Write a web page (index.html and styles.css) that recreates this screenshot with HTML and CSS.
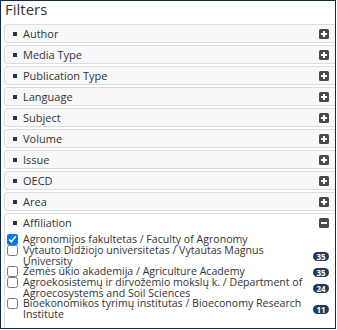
FILE: index.html
```html
<!DOCTYPE html>
<html lang="lt">
<head>
    <meta charset="UTF-8">
    <title>Filters</title>
    <link rel="stylesheet" href="styles.css">
</head>
<body>
    <div class="frame">
        <h2 class="title">Filters</h2>

        <div class="facets">
            <div class="facet"><div class="facet-head"><span class="facet-name">Author</span><span class="toggle plus"></span></div></div>
            <div class="facet"><div class="facet-head"><span class="facet-name">Media Type</span><span class="toggle plus"></span></div></div>
            <div class="facet"><div class="facet-head"><span class="facet-name">Publication Type</span><span class="toggle plus"></span></div></div>
            <div class="facet"><div class="facet-head"><span class="facet-name">Language</span><span class="toggle plus"></span></div></div>
            <div class="facet"><div class="facet-head"><span class="facet-name">Subject</span><span class="toggle plus"></span></div></div>
            <div class="facet"><div class="facet-head"><span class="facet-name">Volume</span><span class="toggle plus"></span></div></div>
            <div class="facet"><div class="facet-head"><span class="facet-name">Issue</span><span class="toggle plus"></span></div></div>
            <div class="facet"><div class="facet-head"><span class="facet-name">OECD</span><span class="toggle plus"></span></div></div>
            <div class="facet"><div class="facet-head"><span class="facet-name">Area</span><span class="toggle plus"></span></div></div>

            <div class="facet open">
                <div class="facet-head"><span class="facet-name">Affiliation</span><span class="toggle minus"></span></div>
                <ul class="facet-list">
                    <li class="opt">
                        <input type="checkbox" checked>
                        <span class="opt-text">Agronomijos fakultetas / Faculty of Agronomy</span>
                    </li>
                    <li class="opt">
                        <input type="checkbox">
                        <span class="opt-text">Vytauto Didžiojo universitetas / Vytautas Magnus University</span>
                        <span class="badge">35</span>
                    </li>
                    <li class="opt">
                        <input type="checkbox">
                        <span class="opt-text">Žemės ūkio akademija / Agriculture Academy</span>
                        <span class="badge">35</span>
                    </li>
                    <li class="opt">
                        <input type="checkbox">
                        <span class="opt-text">Agroekosistemų ir dirvožemio mokslų k. / Department of Agroecosystems and Soil Sciences</span>
                        <span class="badge">24</span>
                    </li>
                    <li class="opt">
                        <input type="checkbox">
                        <span class="opt-text">Bioekonomikos tyrimų institutas / Bioeconomy Research Institute</span>
                        <span class="badge">11</span>
                    </li>
                </ul>
                <a class="more" href="#">Show more</a>
            </div>
        </div>
    </div>
</body>
</html>
```

FILE: styles.css
```css
body {
    margin: 0;
    font-family: "Open Sans", "Noto Sans", sans-serif;
    color: #333;
    background: #fff;
}

.frame {
    box-sizing: border-box;
    width: 336px;
    height: 329px;
    border: 1px solid #102a48;
    overflow: hidden;
}

.title {
    margin: 0;
    padding-left: 4px;
    font-size: 15px;
    font-weight: 400;
    line-height: 17px;
    color: #333;
}

.facets {
    margin-top: 6px;
    padding-left: 3px;
}

.facet {
    width: calc(100% + 2px);
    box-sizing: border-box;
    margin-bottom: 2px;
    background: #f7f8fa;
    border: 1px solid #dcdcdc;
    border-radius: 3px;
}

.facet.open {
    background: #fff;
}

.facet-head {
    display: flex;
    align-items: center;
    height: 17px;
    padding: 0 7px 0 8px;
    font-size: 11px;
    line-height: 17px;
}

.facet-name {
    flex: 1;
    display: flex;
    align-items: center;
}

.facet-name::before {
    content: "";
    width: 4px;
    height: 4px;
    margin-right: 6px;
    background: #333;
}

.toggle {
    position: relative;
    width: 10px;
    height: 10px;
    border-radius: 1.5px;
    background: #4a4a4a;
}

.toggle::before,
.toggle::after {
    content: "";
    position: absolute;
    background: #fff;
}

.toggle::before {
    left: 2px;
    top: 4px;
    width: 6px;
    height: 2px;
}

.plus::after {
    left: 4px;
    top: 2px;
    width: 2px;
    height: 6px;
}

.facet-list {
    list-style: none;
    margin: 0;
    padding: 3px 7px 0 1px;
}

.opt {
    display: flex;
    align-items: center;
    font-size: 10.6px;
    line-height: 10.5px;
}

.opt input {
    width: 11px;
    height: 11px;
    margin: 0 5px 0 1px;
    flex: none;
    align-self: flex-start;
}

.opt-text {
    flex: 1;
    padding-right: 1px;
}

.badge {
    flex: none;
    min-width: 16px;
    height: 9px;
    padding: 0 1px;
    box-sizing: border-box;
    border-radius: 5px;
    background: #1f3a5e;
    color: #fff;
    font-size: 8px;
    font-weight: 700;
    line-height: 9px;
    text-align: center;
    margin-top: 2px;
}

.more {
    display: block;
    padding: 6px 0 0 4px;
    font-size: 11px;
    color: #2a6bb3;
    text-decoration: none;
}
```
